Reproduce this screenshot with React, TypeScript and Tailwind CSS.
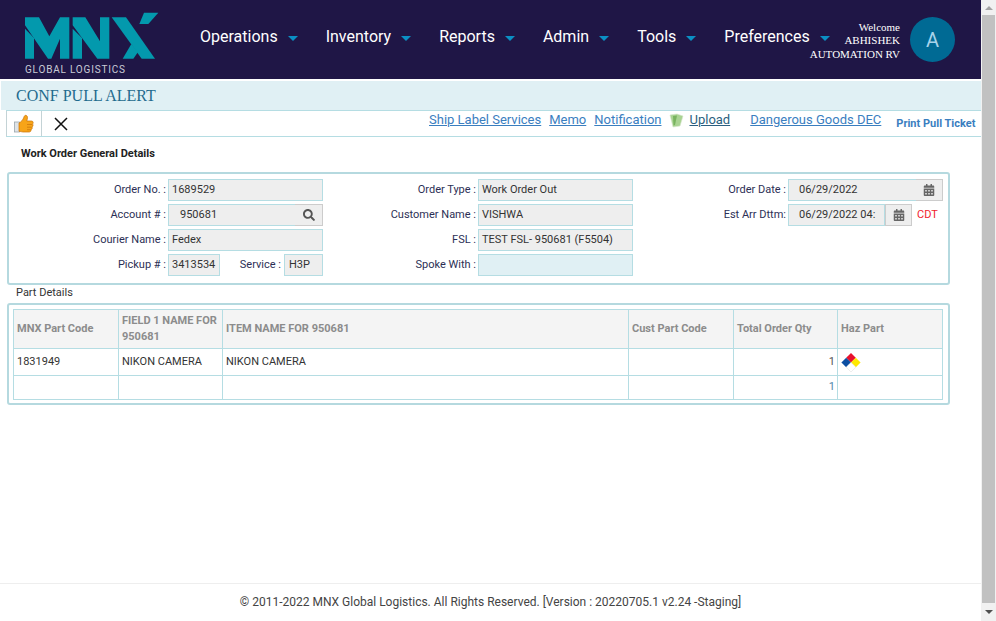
import { FaCalendarAlt, FaSearch } from "react-icons/fa";

const navItems = ["Operations", "Inventory", "Reports", "Admin", "Tools", "Preferences"];

function Logo() {
  return (
    <div className="w-[145px] h-[70px] shrink-0 relative mt-[7px]">
      <svg viewBox="0 0 435 210" className="w-[145px] h-[70px]" fill="#0399ad">
        <polygon points="15,28 57,28 88,85 120,28 148,28 148,152 120,152 120,92 94,152 84,152 15,52" />
        <polygon points="15,62 42,90 42,152 15,152" />
        <polygon points="158,28 196,28 240,100 240,28 268,28 268,152 232,152 158,52" />
        <polygon points="158,62 186,90 186,152 158,152" />
        <polygon points="275,28 318,28 405,152 365,152" />
        <polygon points="372,14 415,14 385,48 358,48" />
        <polygon points="308,152 334,108 354,132 340,152" />
      </svg>
      <span className="absolute left-[5px] top-[56px] text-[10px] leading-3 tracking-[0.8px] text-[#c9cbd6] whitespace-nowrap">
        GLOBAL LOGISTICS
      </span>
    </div>
  );
}

function Header() {
  return (
    <header className="h-[79px] bg-[#1f1646] flex items-center pl-[20px] shrink-0">
      <Logo />
      <nav className="flex w-[600px] shrink-0 ml-[35px] -mt-[5px]">
        {navItems.map((item) => (
          <div key={item} className="flex items-center mr-[28px] last:mr-0 text-white text-base shrink-0">
            <span>{item}</span>
            <span className="ml-[10px] mt-[2px] w-0 h-0 border-x-[5px] border-x-transparent border-t-[5px] border-t-[#0b8fc4]" />
          </div>
        ))}
      </nav>
      <div className="ml-auto mr-[10px] mt-[3px] text-right text-white text-[11px] leading-[13.5px] whitespace-nowrap font-['Liberation_Serif',serif]">
        <div>Welcome</div>
        <div>ABHISHEK</div>
        <div>AUTOMATION RV</div>
      </div>
      <div className="w-[45px] h-[45px] mr-[26px] shrink-0 rounded-full bg-[#006a94] flex items-center justify-center text-[#a7d3ea] text-xl">
        A
      </div>
    </header>
  );
}

function ThumbIcon() {
  return (
    <svg width="20" height="20" viewBox="0 0 20 20">
      <rect x="0.5" y="8" width="5" height="10" fill="#dfe3e6" stroke="#9aa5ad" strokeWidth="0.8" />
      <path
        d="M5 9 C7 8 9 6 10 3 C10.5 0.5 13.5 1 13.5 3.5 C13.5 5 13 6 12.8 7 L17.5 7 C19.5 7 19.5 9.5 18.5 10 C19.5 11 19 12.5 18 13 C18.6 14 18 15.5 17 15.5 C17.3 17 16.5 18 15 18 L9 18 C7.5 18 6.5 17.3 5 17.3 Z"
        fill="#f7a418"
        stroke="#c9730a"
        strokeWidth="0.7"
      />
      <path d="M13 10.5 L18 10.5 M13 13.2 L17.6 13.2 M13 15.7 L16.6 15.7" stroke="#c9730a" strokeWidth="0.7" />
    </svg>
  );
}

function UploadIcon() {
  return (
    <svg width="15" height="15" viewBox="0 0 15 15">
      <path d="M1 2 L8 1 L14 3 L11 13 L4 14 Z" fill="#a9d392" stroke="#d6e6cc" strokeWidth="0.6" />
      <path d="M4 3 L8 2.5 L6 12 L4.5 12.5 Z" fill="#78b35f" />
    </svg>
  );
}

function Toolbar() {
  const link = "text-[13px] text-[#3a7ebf] underline";
  return (
    <div className="h-[27px] ml-[6px] border-y border-[#b5dde3] flex items-stretch shrink-0">
      <div className="w-[36px] border-x border-[#c4d3d6] flex items-center justify-center">
        <ThumbIcon />
      </div>
      <div className="w-[37px] flex items-center justify-center">
        <svg width="14" height="14" viewBox="0 0 14 14" stroke="#111" strokeWidth="1.5">
          <path d="M1 1 L13 13 M13 1 L1 13" />
        </svg>
      </div>
      <div className="ml-[350px] flex items-start pt-[1px] leading-[15px]">
        <a className={link}>Ship Label Services</a>
        <a className={`${link} ml-[8px]`}>Memo</a>
        <a className={`${link} ml-[8px]`}>Notification</a>
        <span className="ml-[8px] mt-[1px]">
          <UploadIcon />
        </span>
        <a className="ml-[5px] text-[13px] text-[#2b5f80] underline">Upload</a>
        <a className={`${link} ml-[20px]`}>Dangerous Goods DEC</a>
        <a className="ml-[15px] mt-[4px] text-[11px] font-bold text-[#3a7ebf]">Print Pull Ticket</a>
      </div>
    </div>
  );
}

const inputBox = "h-[22px] bg-[#eeeeee] border border-[#b5dde3] flex items-center text-[11px] text-[#333]";

function Label({ children, w = "w-[155px]" }: { children: string; w?: string }) {
  return <div className={`${w} shrink-0 text-right pr-[2px] text-[11px] text-[#2c2f55] whitespace-nowrap`}>{children}</div>;
}

function Field({ label, value }: { label: string; value: string }) {
  return (
    <div className="flex items-center h-[22px]">
      <Label>{label}</Label>
      <div className={`${inputBox} w-[155px] pl-[3px]`}>{value}</div>
    </div>
  );
}

function DateField({ label, value, w, extra }: { label: string; value: string; w: string; extra?: boolean }) {
  return (
    <div className="flex items-center h-[22px]">
      <Label>{label}</Label>
      <div className={`${inputBox} ${w} pl-[10px] whitespace-nowrap overflow-hidden`}>{value}</div>
      <div
        className={`${extra ? "w-[27px]" : "w-[27px] -ml-[27px] border-l-0"} h-[22px] border border-[#cccccc] bg-[#eeeeee] flex items-center justify-center text-[#666]`}
      >
        <FaCalendarAlt size={12} />
      </div>
      {extra && <span className="ml-[5px] text-[11px] text-[#f01c2e]">CDT</span>}
    </div>
  );
}

function GeneralDetails() {
  return (
    <div className="w-[943px] h-[113px] ml-[7px] mt-[9px] border-2 border-[#b5d9df] rounded-[3px] pl-[4px] pt-[5px] grid grid-cols-[310px_310px_310px] gap-y-[3px] auto-rows-[22px] shrink-0">
      <Field label="Order No. :" value="1689529" />
      <Field label="Order Type :" value="Work Order Out" />
      <DateField label="Order Date :" value="06/29/2022" w="w-[155px]" />

      <div className="flex items-center h-[22px]">
        <Label>Account # :</Label>
        <div className={`${inputBox} w-[155px] pl-[11px] relative`}>
          950681
          <div className="absolute -right-px -top-px w-[28px] h-[22px] border border-l-0 border-[#cccccc] flex items-center justify-center text-[#555]">
            <FaSearch size={12} />
          </div>
        </div>
      </div>
      <Field label="Customer Name :" value="VISHWA" />
      <DateField label="Est Arr Dttm:" value="06/29/2022 04:" w="w-[97px]" extra />

      <Field label="Courier Name :" value="Fedex" />
      <Field label="FSL :" value="TEST FSL- 950681 (F5504)" />
      <div />

      <div className="flex items-center h-[22px]">
        <Label>Pickup # :</Label>
        <div className={`${inputBox} w-[52px] pl-[3px]`}>3413534</div>
        <div className="w-[64px] shrink-0 text-right pr-[3px] text-[11px] text-[#2c2f55]">Service :</div>
        <div className={`${inputBox} w-[39px] pl-[4px]`}>H3P</div>
      </div>
      <div className="flex items-center h-[22px]">
        <Label>Spoke With :</Label>
        <div className="h-[22px] w-[155px] bg-[#e0f0f4] border border-[#b5dde3]" />
      </div>
      <div />
    </div>
  );
}

function HazIcon() {
  return (
    <svg width="20" height="19" viewBox="0 0 20 19" className="block">
      <polygon points="10,0 14.8,4.7 10,9.5 5.2,4.7" fill="#e8112d" />
      <polygon points="5.2,4.7 10,9.5 5.2,14.2 0.4,9.5" fill="#0b4ea2" />
      <polygon points="14.8,4.7 19.6,9.5 14.8,14.2 10,9.5" fill="#ffe800" />
      <polygon points="10,9.5 14.8,14.2 10,19 5.2,14.2" fill="#fff" stroke="#ddd" strokeWidth="0.5" />
    </svg>
  );
}

function PartTable() {
  const th = "border border-[#b5dde3] px-[3px] text-left align-middle text-[11px] leading-4 font-bold text-[#8c8c8c]";
  const cell = "border border-[#b5dde3] px-[3px] text-[11px] align-middle";
  const td = `${cell} text-[#333]`;
  const qty = "border border-[#b5dde3] pl-[3px] pr-[2px] text-[11px] text-right align-middle";
  return (
    <div className="w-[943px] h-[102px] ml-[7px] border-2 border-[#b5d9df] rounded-[3px] pl-[4px] pt-[4px] shrink-0">
      <table className="table-fixed border-collapse w-[929px]">
        <colgroup>
          <col className="w-[105px]" />
          <col className="w-[104px]" />
          <col className="w-[406px]" />
          <col className="w-[105px]" />
          <col className="w-[104px]" />
          <col className="w-[105px]" />
        </colgroup>
        <thead>
          <tr className="h-[39px] bg-[#f4f4f4]">
            <th className={th}>MNX Part Code</th>
            <th className={th}>FIELD 1 NAME FOR 950681</th>
            <th className={th}>ITEM NAME FOR 950681</th>
            <th className={th}>Cust Part Code</th>
            <th className={th}>Total Order Qty</th>
            <th className={th}>Haz Part</th>
          </tr>
        </thead>
        <tbody>
          <tr className="h-[27px]">
            <td className={td}>1831949</td>
            <td className={td}>NIKON CAMERA</td>
            <td className={td}>NIKON CAMERA</td>
            <td className={td} />
            <td className={`${qty} text-[#555]`}>1</td>
            <td className={td}>
              <HazIcon />
            </td>
          </tr>
          <tr className="h-[24px]">
            <td className={td} />
            <td className={td} />
            <td className={td} />
            <td className={td} />
            <td className={`${qty} text-[#4f86a8]`}>1</td>
            <td className={td} />
          </tr>
        </tbody>
      </table>
    </div>
  );
}

function Scrollbar() {
  return (
    <div className="w-[15px] h-[621px] bg-[#f1f1f1] flex flex-col items-center shrink-0">
      <div className="h-[15px] flex items-center justify-center">
        <span className="w-0 h-0 border-x-4 border-x-transparent border-b-4 border-b-[#a3a3a3]" />
      </div>
      <div className="w-[13px] flex-1 bg-[#c1c1c1]" />
      <div className="h-[18px] flex items-center justify-center">
        <span className="w-0 h-0 border-x-4 border-x-transparent border-t-4 border-t-[#505050]" />
      </div>
    </div>
  );
}

export default function App() {
  return (
    <div className="w-[996px] h-[621px] flex bg-white overflow-hidden font-['Roboto',sans-serif]">
      <main className="w-[981px] flex flex-col">
        <Header />
        <div className="h-[29px] mt-[2px] ml-px bg-[#e0f0f4] pl-[15px] flex items-center text-base text-[#1f6b8e] font-['Liberation_Serif',serif] shrink-0">
          CONF PULL ALERT
        </div>
        <Toolbar />
        <div className="h-[26px] pl-[21px] pt-[10px] text-[11px] leading-[13px] font-bold text-[#222] shrink-0">
          Work Order General Details
        </div>
        <GeneralDetails />
        <div className="h-[18px] pl-[16px] pt-[1px] text-[11px] leading-[13px] text-[#333] shrink-0">Part Details</div>
        <PartTable />
        <footer className="mt-auto h-[38px] border-t border-[#eeeeee] flex items-center justify-center pb-[2px] text-xs text-[#444]">
          © 2011-2022 MNX Global Logistics. All Rights Reserved. [Version : 20220705.1 v2.24 -Staging]
        </footer>
      </main>
      <Scrollbar />
    </div>
  );
}
